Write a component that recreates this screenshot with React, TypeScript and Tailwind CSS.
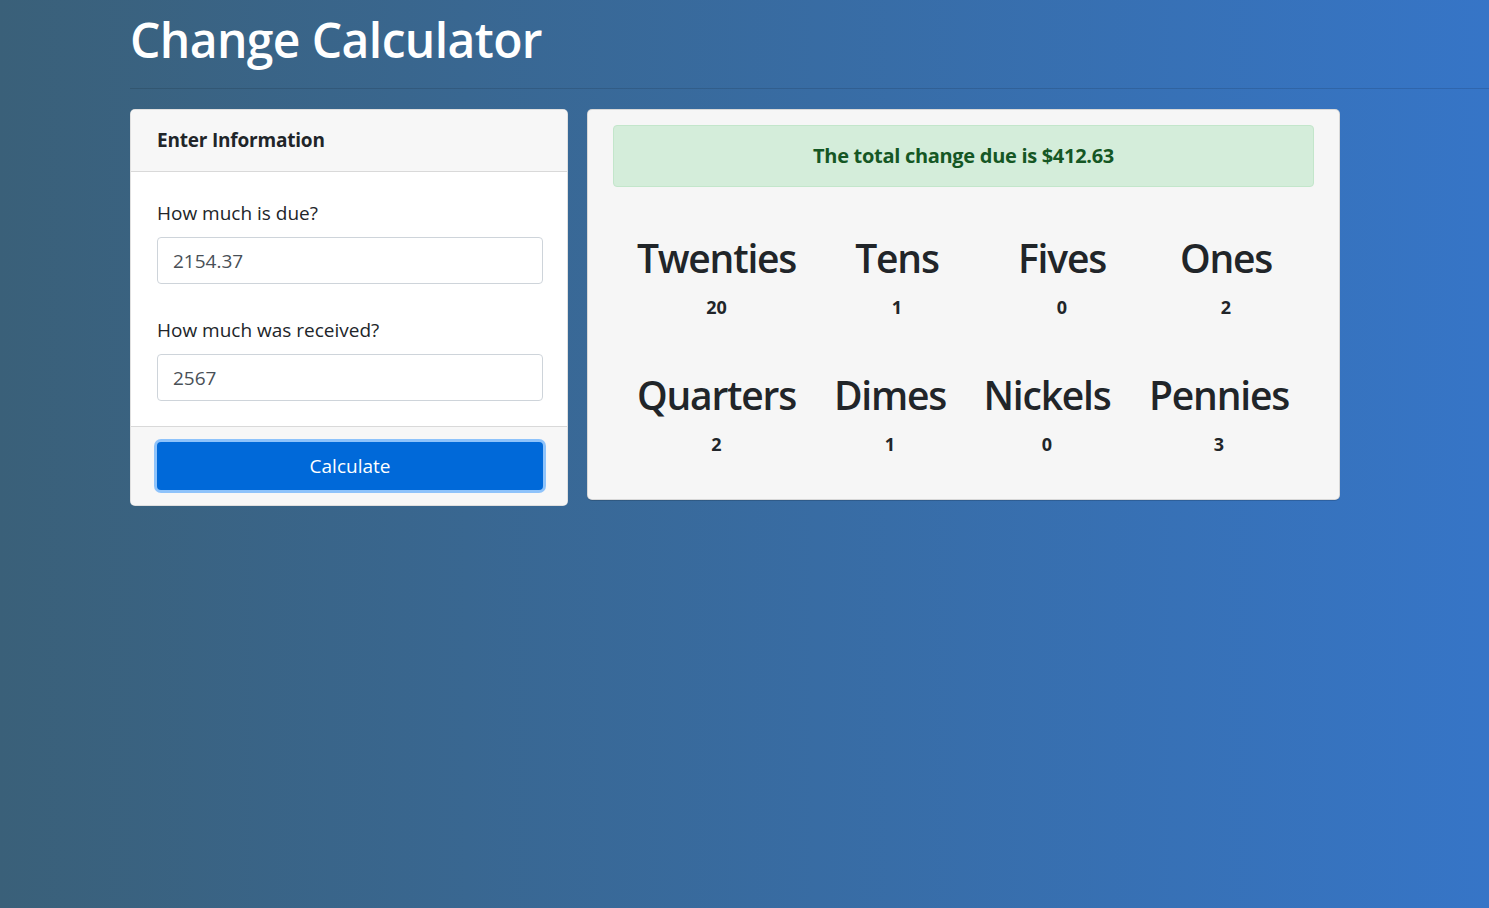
const rows = [
  [
    { name: 'Twenties', count: 20, w: 'w-[197px]' },
    { name: 'Tens', count: 1, w: 'w-[164px]' },
    { name: 'Fives', count: 0, w: 'w-[166px]' },
    { name: 'Ones', count: 2, w: 'w-[162px]' },
  ],
  [
    { name: 'Quarters', count: 2, w: 'w-[197px]' },
    { name: 'Dimes', count: 1, w: 'w-[150px]' },
    { name: 'Nickels', count: 0, w: 'w-[164px]' },
    { name: 'Pennies', count: 3, w: 'w-[180px]' },
  ],
];

export default function App() {
  return (
    <div className="min-h-[908px] bg-gradient-to-r from-[#3a6079] to-[#3675c7] font-['Open_Sans','Noto_Sans',sans-serif] text-[#212529]">
      <div className="pl-[130px]">
        <h1 className="pt-[10px] pb-[18px] text-[48px] leading-[60px] font-semibold tracking-[-0.6px] text-white">
          Change Calculator
        </h1>
      </div>
      <div className="ml-[130px] border-t border-[rgba(0,0,0,0.12)]" />

      <div className="flex items-start gap-[19px] pl-[130px] pt-[20px]">
        {/* input card */}
        <div className="w-[438px] overflow-hidden rounded-[5px] border border-[rgba(0,0,0,0.12)] bg-white">
          <div className="flex h-[62px] items-center border-b border-[rgba(0,0,0,0.12)] bg-[#f7f7f7] px-[26px]">
            <span className="text-[19px] font-bold tracking-[-0.2px]">Enter Information</span>
          </div>
          <div className="pl-[26px] pr-[24px] pt-[27px] pb-[25px]">
            <label className="block text-[19px] leading-[28px] text-[#212529]">How much is due?</label>
            <input
              readOnly
              value="2154.37"
              className="mt-[10px] h-[47px] w-full rounded-[4px] border border-[#ced4da] bg-white px-[15px] text-[19px] text-[#495057] outline-none"
            />
            <label className="mt-[32px] block text-[19px] leading-[28px] text-[#212529]">How much was received?</label>
            <input
              readOnly
              value="2567"
              className="mt-[10px] h-[47px] w-full rounded-[4px] border border-[#ced4da] bg-white px-[15px] text-[19px] text-[#495057] outline-none"
            />
          </div>
          <div className="border-t border-[rgba(0,0,0,0.12)] bg-[#f7f7f7] pl-[26px] pr-[24px] py-[15px]">
            <button className="h-[48px] w-full rounded-[4px] bg-[#0069d9] text-[19px] text-white shadow-[0_0_0_3px_rgba(38,143,255,0.5)]">
              Calculate
            </button>
          </div>
        </div>

        {/* result card */}
        <div className="w-[753px] rounded-[5px] border border-[rgba(0,0,0,0.12)] bg-[#f6f6f6] px-[25px] pt-[15px] pb-[43px] shadow-[0_1px_0_rgba(0,0,0,0.15)]">
          <div className="flex h-[62px] items-center justify-center rounded-[4px] border border-[#c3e6cb] bg-[#d4edda] text-[20px] font-bold tracking-[-0.3px] text-[#155724]">
            The total change due is $412.63
          </div>
          <div className="pt-[47px] pl-[5px]">
            {rows.map((row, i) => (
              <div key={i} className={`flex ${i > 0 ? 'mt-[52px]' : ''}`}>
                {row.map((d) => (
                  <div key={d.name} className={`${d.w} text-center`}>
                    <div className="text-[39px] leading-[48px] font-semibold tracking-[-1.2px]">{d.name}</div>
                    <div className="mt-[13px] text-[18px] leading-[24px] font-bold">{d.count}</div>
                  </div>
                ))}
              </div>
            ))}
          </div>
        </div>
      </div>
    </div>
  );
}
